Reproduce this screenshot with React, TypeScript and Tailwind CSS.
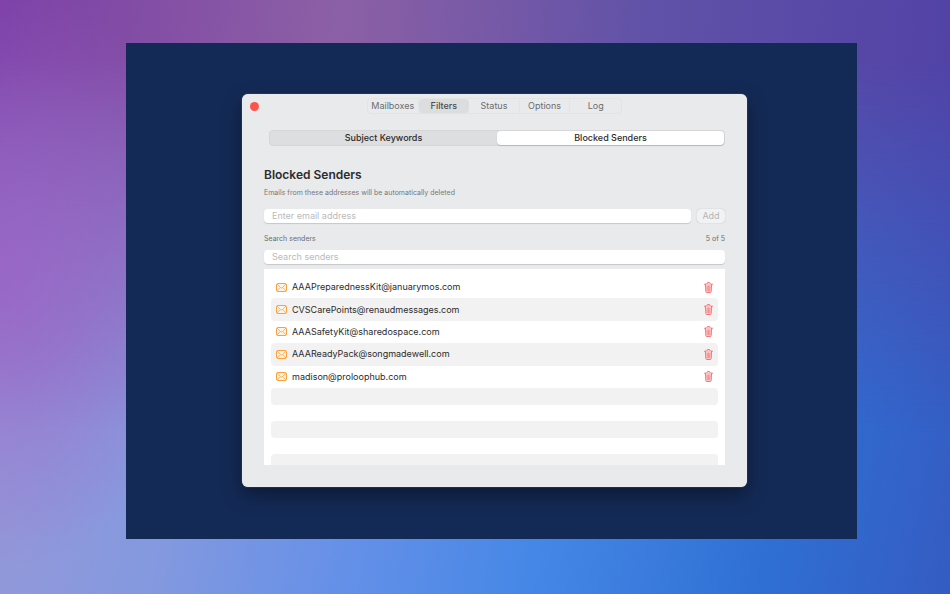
import { useState } from "react";

const tabs = ["Mailboxes", "Filters", "Status", "Options", "Log"];

const initialSenders = [
  "AAAPreparednessKit@januarymos.com",
  "CVSCarePoints@renaudmessages.com",
  "AAASafetyKit@sharedospace.com",
  "AAAReadyPack@songmadewell.com",
  "madison@proloophub.com",
];

function EnvelopeIcon() {
  return (
    <svg viewBox="0 0 22 18" className="w-[11px] h-[9px] shrink-0" fill="#fff3e4" stroke="#f9a03f" strokeWidth="2" aria-hidden="true">
      <rect x="1" y="1" width="20" height="16" rx="2.5" />
      <path d="M2 2l7.4 7.500c1 .9 2.200.9 3.200 0L20 2M2 16l6.400-7M20 16l-6.400-7" fill="none" strokeWidth="1.500" />
    </svg>
  );
}

function TrashIcon() {
  return (
    <svg viewBox="0 0 18 22" className="w-[9px] h-[11px]" fill="none" stroke="#f8696b" strokeWidth="1.8" strokeLinecap="round" strokeLinejoin="round" aria-hidden="true">
      <path d="M1 4.500h16M6 4V2.500C6 1.600 6.600 1 7.500 1h3c.9 0 1.500.6 1.500 1.500V4" />
      <path d="M2.800 4.500l.8 14.500c.1 1.300.8 2 2 2h6.800c1.200 0 1.900-.7 2-2l.8-14.500" fill="#fcd3d3" />
      <path d="M6.300 8l.3 9.500M9 8v9.500M11.700 8l-.3 9.500" strokeWidth="1.300" />
    </svg>
  );
}

export default function App() {
  const [tab, setTab] = useState("Filters");
  const [senders, setSenders] = useState(initialSenders);
  const [email, setEmail] = useState("");
  const [query, setQuery] = useState("");

  const visible = senders.filter((s) => s.toLowerCase().includes(query.toLowerCase()));

  const addSender = () => {
    setSenders([...senders, email]);
    setEmail("");
  };

  return (
    <div className="relative isolate min-h-screen flex pl-[126px] pr-[93px] pt-[43px] pb-[55px] font-['Inter',sans-serif] bg-[linear-gradient(100deg,#9b98d6_0%,#8499df_24%,#6590e8_42%,#4587e6_60%,#2f6fd4_82%,#355cc2_100%)]">
      {/* Wallpaper tint, strongest at the top */}
      <div className="absolute inset-0 -z-10 bg-[linear-gradient(95deg,#7c40a6_0%,#8c60a5_34%,#6052a8_65%,#5040a6_100%)] mask-[linear-gradient(#000_0%,#000_10%,transparent_72%)]" />
      <div className="absolute inset-0 -z-10 bg-[radial-gradient(ellipse_22%_50%_at_0%_46%,#9c64c8d0_0%,#9c64c800_100%)]" />

      <div className="flex-1 flex pl-[116px] pr-[110px] pt-[51px] pb-[52px] bg-[#142a56]">
        <main className="flex-1 min-w-0 flex flex-col rounded-md bg-[#e9eaec] text-[#2b2b2d] shadow-[0_0_1px_#aab4c8,0_8px_20px_rgba(0,0,0,0.4)]">
          {/* Title bar */}
          <header className="grid grid-cols-[1fr_auto_1fr] items-center pt-1 px-2">
            <button type="button" aria-label="Close" className="size-[9px] rounded-full bg-[#fb544d]" />
            <nav className="grid grid-cols-5 w-[255px] h-4 rounded-sm border border-[#e2e3e5]">
              {tabs.map((name) => (
                <button
                  key={name}
                  type="button"
                  onClick={() => setTab(name)}
                  className={
                    name === tab
                      ? "rounded-sm bg-[#dcdddf] text-[9px] leading-[14px] font-medium text-[#4c4c4e]"
                      : "text-[9px] leading-[14px] text-[#6c6d6f] border-r border-[#e3e4e6] last:border-r-0"
                  }
                >
                  {name}
                </button>
              ))}
            </nav>
          </header>

          {/* Filter type switch */}
          <div className="mt-4 ml-[27px] mr-[22px] h-4 grid grid-cols-2 rounded-sm border border-[#d5d6d8] bg-[#dddedf] text-[9px] leading-[14px] font-medium">
            <button type="button">Subject Keywords</button>
            <button type="button" className="rounded-sm bg-white shadow-[0_1px_1px_rgba(0,0,0,0.15)]">
              Blocked Senders
            </button>
          </div>

          <section className="flex-1 flex flex-col mx-[22px] mb-[22px]">
            <h1 className="mt-[21px] text-[12px] leading-4 font-semibold">Blocked Senders</h1>
            <p className="mt-[5px] text-[7px] leading-[10px] text-[#77787a]">
              Emails from these addresses will be automatically deleted
            </p>

            <div className="mt-[11px] flex gap-[6px]">
              <input
                type="email"
                aria-label="Email address"
                placeholder="Enter email address"
                value={email}
                onChange={(e) => setEmail(e.target.value)}
                className="flex-1 min-w-0 h-[14px] px-2 rounded-sm bg-white text-[9px] leading-[14px] placeholder:text-[#b9babc] shadow-[0_1px_1px_rgba(0,0,0,0.15)] outline-none"
              />
              <button
                type="button"
                disabled={!email}
                onClick={addSender}
                className="w-7 h-[14px] rounded-sm bg-[#f1f2f3] text-[9px] leading-[14px] text-[#b4b5b7] shadow-[0_0_1px_rgba(0,0,0,0.3)]"
              >
                Add
              </button>
            </div>

            <div className="mt-[11px] flex justify-between text-[7px] leading-[10px] text-[#6c6d6f]">
              <label htmlFor="search">Search senders</label>
              <span>
                {visible.length} of {senders.length}
              </span>
            </div>
            <input
              id="search"
              type="text"
              placeholder="Search senders"
              value={query}
              onChange={(e) => setQuery(e.target.value)}
              className="mt-[6px] h-[14px] px-2 rounded-sm bg-white text-[9px] leading-[14px] placeholder:text-[#b9babc] shadow-[0_1px_1px_rgba(0,0,0,0.15)] outline-none"
            />

            {/* Senders */}
            <div className="mt-[5px] flex-1 basis-0 min-h-0 overflow-hidden bg-white pt-[7px] px-[7px]">
              <ul className="grid grid-rows-5 h-28">
                {visible.map((sender) => (
                  <li key={sender} className="flex items-center px-[5px] rounded-sm even:bg-[#f2f2f2]">
                    <EnvelopeIcon />
                    <span className="ml-[5px] flex-1 text-[9px] leading-3">{sender}</span>
                    <button
                      type="button"
                      aria-label={`Remove ${sender}`}
                      onClick={() => setSenders(senders.filter((s) => s !== sender))}
                    >
                      <TrashIcon />
                    </button>
                  </li>
                ))}
              </ul>
              <div className="flex flex-col gap-4">
                <div className="h-[17px] shrink-0 rounded-sm bg-[#f2f2f2]" />
                <div className="h-[17px] shrink-0 rounded-sm bg-[#f2f2f2]" />
                <div className="h-[17px] shrink-0 rounded-sm bg-[#f2f2f2]" />
              </div>
            </div>
          </section>
        </main>
      </div>
    </div>
  );
}
